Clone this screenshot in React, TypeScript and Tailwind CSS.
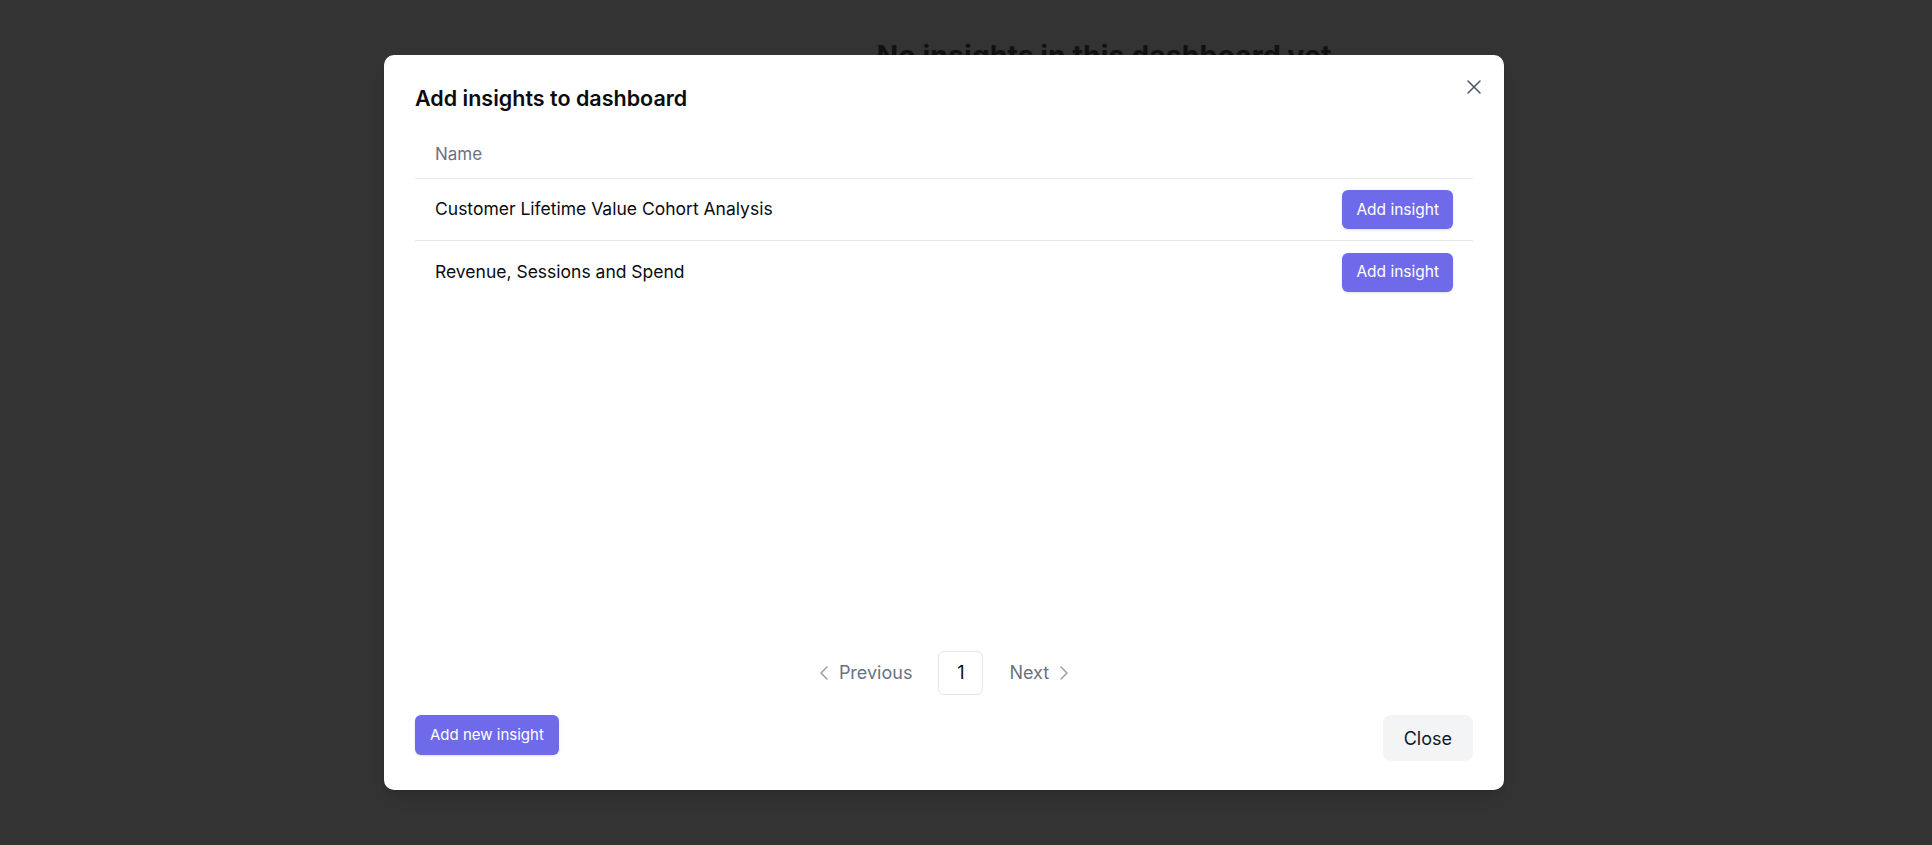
import { ChevronLeft, ChevronRight, X } from "lucide-react";

const insights = [
	"Customer Lifetime Value Cohort Analysis",
	"Revenue, Sessions and Spend",
];

export default function App() {
	return (
		<div
			className="relative h-[845px] w-full overflow-hidden bg-[#333333]"
			style={{ fontFamily: "Inter, 'Noto Sans', sans-serif" }}
		>
			{/* page behind the overlay */}
			<div className="flex justify-center pl-[276px] pt-[35px]">
				<h2 className="text-[28.5px] font-bold text-[#111111]">
					No insights in this dashboard yet
				</h2>
			</div>

			{/* modal */}
			<div className="absolute left-[384px] top-[55px] flex h-[735px] w-[1120px] flex-col rounded-[10px] bg-white px-[31px] pt-[29px] pb-[29px] shadow-lg">
				<button className="absolute right-[18px] top-[20px] text-gray-600">
					<X size={24} strokeWidth={1.5} />
				</button>
				<h1 className="mb-[19px] text-[21.5px] leading-[28px] font-semibold text-[#0b0b12]">
					Add insights to dashboard
				</h1>

				<div className="flex h-[48px] items-center border-b border-gray-200 px-5 text-[17px] text-gray-500">
					Name
				</div>
				{insights.map((name, i) => (
					<div
						key={name}
						className={`flex h-[62px] items-center justify-between px-5 ${
							i === 0 ? "border-b border-gray-200" : ""
						}`}
					>
						<span className="text-[17.5px] text-[#0b0b12]">{name}</span>
						<button className="h-[39px] rounded-md bg-[#6f6ae9] px-[14px] text-[15.5px] text-white shadow-sm">
							Add insight
						</button>
					</div>
				))}

				<div className="flex-1" />

				<div className="flex h-[43px] items-center justify-center">
					<button className="flex items-center gap-[3px] text-[18px] text-gray-500">
						<ChevronLeft size={24} strokeWidth={1.5} className="text-gray-400" />
						Previous
					</button>
					<div className="ml-[26px] flex h-[44px] w-[45px] items-center justify-center rounded-md border border-gray-200 text-[18px] text-[#0b0b12]">
						1
					</div>
					<button className="ml-[26px] flex items-center gap-[3px] text-[18px] text-gray-500">
						Next
						<ChevronRight size={24} strokeWidth={1.5} className="text-gray-400" />
					</button>
				</div>

				<div className="mt-[21px] flex items-start justify-between">
					<button className="h-[40px] rounded-md bg-[#6f6ae9] px-[15px] text-[15px] text-white shadow-sm">
						Add new insight
					</button>
					<button className="h-[46px] rounded-lg bg-gray-100 px-[21px] text-[18px] text-gray-900">
						Close
					</button>
				</div>
			</div>
		</div>
	);
}
